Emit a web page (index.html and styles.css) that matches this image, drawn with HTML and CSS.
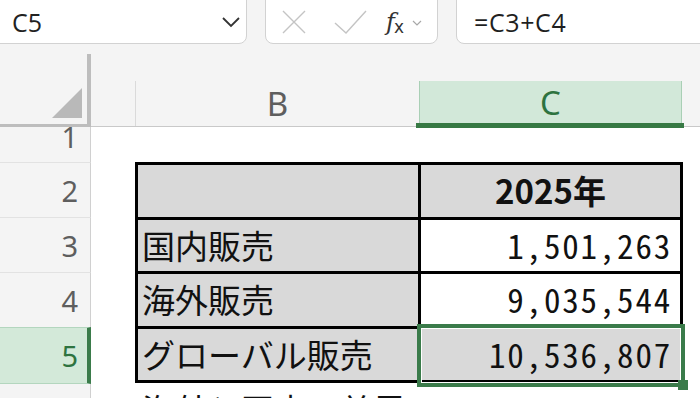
FILE: index.html
```html
<!DOCTYPE html>
<html lang="ja">
<head>
    <meta charset="UTF-8">
    <meta name="viewport" content="width=device-width, initial-scale=1.0">
    <title>販売シート</title>
    <link rel="stylesheet" href="styles.css">
</head>
<body>
    <div class="app">
        <div class="toolbar">
            <div class="namebox">
                <span>C5</span>
                <svg class="chev" width="20" height="12" viewBox="0 0 20 12"><path d="M2 2 L10 10 L18 2" /></svg>
            </div>
            <div class="fxbox">
                <svg class="cancel" width="24" height="24" viewBox="0 0 24 24"><path d="M1 1 L23 23 M23 1 L1 23" /></svg>
                <svg class="ok" width="33" height="24" viewBox="0 0 33 24"><path d="M1 13 L12 23 L32 1" /></svg>
                <span class="fx"><i>f</i><span>x</span></span>
                <svg class="chev-sm" width="10" height="6" viewBox="0 0 10 6"><path d="M1 1 L5 5 L9 1" /></svg>
            </div>
            <div class="formula">=C3+C4</div>
        </div>

        <div class="sheet">
            <div class="rowheads">
                <div class="corner"><span class="tri"></span></div>
                <div class="rh first"><span>1</span></div>
                <div class="rh">2</div>
                <div class="rh">3</div>
                <div class="rh">4</div>
                <div class="rh active">5</div>
                <div class="rh">6</div>
            </div>

            <div class="main">
                <div class="colheads">
                    <div class="ch col-a"></div>
                    <div class="ch col-b">B</div>
                    <div class="ch col-c active">C</div>
                    <div class="ch col-d"></div>
                </div>

                <div class="cells">
                    <div class="tbl">
                        <div class="cell"></div>
                        <div class="cell head">2025年</div>
                        <div class="cell">国内販売</div>
                        <div class="cell num">1,501,263</div>
                        <div class="cell">海外販売</div>
                        <div class="cell num">9,035,544</div>
                        <div class="cell">グローバル販売</div>
                        <div class="cell num grey">10,536,807</div>
                        <div class="selection"><span class="handle"></span></div>
                    </div>
                    <div class="plain">
                        <div class="cell">海外と国内の差異</div>
                        <div class="cell num">7,534,281</div>
                    </div>
                </div>
            </div>
        </div>
    </div>
</body>
</html>
```

FILE: styles.css
```css
body {
    margin: 0;
    padding: 0;
    width: 700px;
    height: 398px;
    overflow: hidden;
    background-color: #f4f4f4;
    font-family: "Open Sans", "Noto Sans", sans-serif;
}
.app {
    width: 700px;
    height: 398px;
    overflow: hidden;
}

/* formula bar */
.toolbar {
    height: 54px;
    display: flex;
    gap: 18px;
    align-items: flex-start;
}
.namebox, .fxbox, .formula {
    box-sizing: border-box;
    height: 52px;
    margin-top: -8px;
    background: #fff;
    border: 1.5px solid #d2d2d2;
    border-radius: 8px;
    display: flex;
    align-items: center;
    padding-top: 8px;
}
.namebox {
    width: 257px;
    margin-left: -10px;
    padding-left: 21px;
    padding-right: 5px;
    justify-content: space-between;
    font-size: 25px;
    color: #222;
}
.chev path {
    fill: none;
    stroke: #333;
    stroke-width: 1.8;
}
.fxbox {
    width: 173px;
    padding-left: 16px;
}
.cancel path, .ok path {
    fill: none;
    stroke: #c4c4c4;
    stroke-width: 1.4;
}
.ok {
    margin-left: 28px;
}
.fx {
    margin-left: 19px;
    font-family: "DejaVu Serif", serif;
    font-size: 24px;
    color: #333;
    letter-spacing: -1px;
}
.fx span {
    font-family: "DejaVu Sans", sans-serif;
    font-size: 17px;
    position: relative;
    top: 3px;
}
.chev-sm {
    margin-left: 9px;
    margin-top: 2px;
}
.chev-sm path {
    fill: none;
    stroke: #a8a8a8;
    stroke-width: 1.2;
}
.formula {
    flex: 1;
    margin-right: -20px;
    padding-left: 17px;
    font-size: 25px;
    font-weight: 500;
    color: #1f1f1f;
    letter-spacing: 0.6px;
}

/* sheet */
.sheet {
    display: flex;
    height: 344px;
}
.rowheads {
    width: 91px;
    flex: none;
}
.corner {
    box-sizing: border-box;
    height: 73px;
    border-right: 4px solid #bdbdbd;
    border-bottom: 3px solid #bdbdbd;
    display: flex;
    justify-content: flex-end;
    align-items: flex-end;
    padding: 0 5px 6px 0;
}
.tri {
    width: 0;
    height: 0;
    border-left: 30px solid transparent;
    border-bottom: 30px solid #b9b9b9;
}
.rh {
    box-sizing: border-box;
    height: 55px;
    border-right: 1px solid #d0d0d0;
    border-bottom: 1px solid #e2e2e2;
    display: flex;
    align-items: center;
    justify-content: flex-end;
    padding-right: 12px;
    font-family: "Noto Sans", sans-serif;
    font-size: 29px;
    color: #5e5e5e;
}
.rh.first {
    height: 36px;
    align-items: flex-start;
    line-height: 30px;
    overflow: hidden;
}
.rh.first span {
    margin-top: -5px;
}
.rh.active {
    background: #d3e9d9;
    color: #2e7340;
    border-top: 1px solid #b3d6be;
    border-bottom: 1px solid #b3d6be;
    border-right: 4px solid #3a7b4a;
    padding-right: 9px;
    margin-top: -1px;
    height: 57px;
}

.main {
    flex: 1;
    display: flex;
    flex-direction: column;
}
.colheads {
    height: 73px;
    flex: none;
    display: flex;
    align-items: flex-end;
    border-bottom: 1px solid #c9c9c9;
    box-sizing: border-box;
}
.ch {
    box-sizing: border-box;
    height: 45px;
    display: flex;
    align-items: center;
    justify-content: center;
    font-family: "Noto Sans", sans-serif;
    font-size: 33px;
    color: #5e5e5e;
}
.col-a {
    width: 45px;
    border-right: 1px solid #dadada;
}
.col-b {
    width: 283px;
}
.col-c {
    width: 263px;
}
.col-d {
    flex: 1;
}
.ch.active {
    position: relative;
    background: #d2e8d9;
    color: #2e7340;
    border-left: 1px solid #a9cfb5;
    border-right: 1px solid #a9cfb5;
    padding-bottom: 2px;
}
.ch.active::after {
    content: "";
    position: absolute;
    left: -4px;
    right: -3px;
    bottom: -2px;
    height: 5px;
    background: #377944;
}

.cells {
    flex: 1;
    background: #fff;
    padding: 35px 0 0 44px;
    font-family: "Noto Sans CJK JP", sans-serif;
    font-size: 33px;
    color: #111;
}
.tbl {
    position: relative;
    display: grid;
    grid-template-columns: 280px 259px;
    grid-auto-rows: 51.5px;
    gap: 3px;
    padding: 3px;
    width: max-content;
    background: #000;
}
.cell {
    display: flex;
    align-items: center;
    padding-left: 4px;
    background: #d9d9d9;
    white-space: nowrap;
    line-height: 1;
}
.cell.head {
    justify-content: center;
    padding-left: 0;
    font-weight: bold;
}
.cell.num {
    justify-content: flex-end;
    padding: 0 8px 0 0;
    background: #fff;
    font-feature-settings: "hwid" 1;
    letter-spacing: 1.8px;
}
.cell.num.grey {
    background: #d9d9d9;
}
.selection {
    position: absolute;
    left: 282px;
    top: 162px;
    width: 268px;
    height: 63px;
    box-sizing: border-box;
    border: 4px solid #3a7b4a;
    box-shadow: inset 0 0 0 1px #fff;
}
.handle {
    position: absolute;
    right: -7px;
    bottom: -7px;
    width: 10px;
    height: 10px;
    background: #3a7b4a;
}
.plain {
    display: grid;
    grid-template-columns: 280px 259px;
    grid-auto-rows: 52px;
    gap: 3px;
    padding: 0 3px;
    width: max-content;
}
.plain .cell {
    background: #fff;
}
```
